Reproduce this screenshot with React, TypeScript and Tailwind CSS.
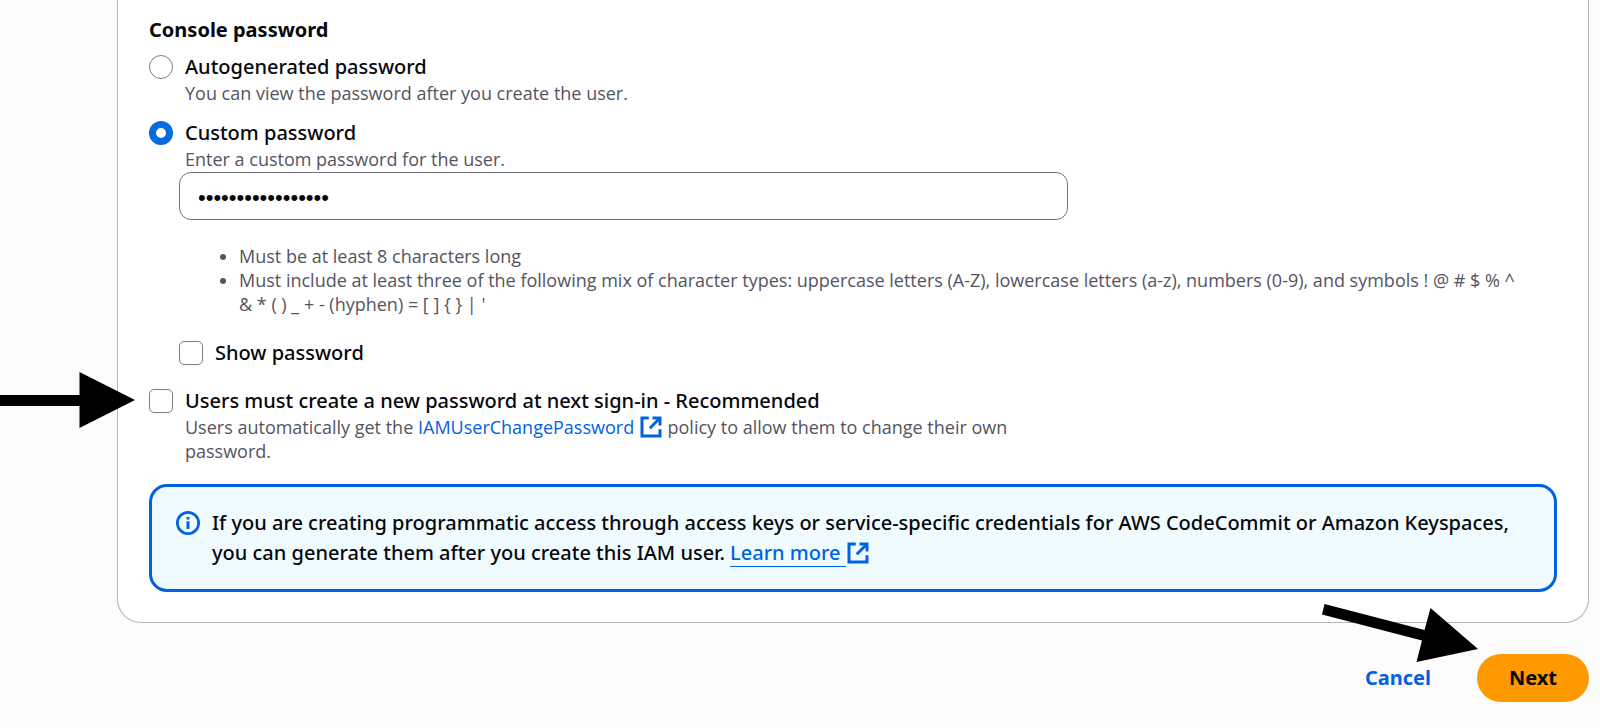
import { useState } from 'react'
import type { ReactNode } from 'react'

function ExternalIcon() {
  return (
    <svg viewBox="0 0 16 16" className="-mt-1 inline-block h-6 w-6" fill="none" stroke="currentColor" strokeWidth="2" aria-hidden="true">
      <path d="M9 2h5v5" />
      <path d="m7.2 8.8 6.3-6.3" />
      <path d="M14 9.5V14H2V2h4.5" />
    </svg>
  )
}

function InfoIcon() {
  return (
    <svg viewBox="0 0 16 16" className="mt-[3px] h-6 w-6 shrink-0 text-[#0062e0]" aria-hidden="true">
      <circle cx="8" cy="8" r="7.1" fill="none" stroke="currentColor" strokeWidth="1.8" />
      <path d="M7 4h2v1.7H7zM7 6.8h2V12H7z" fill="currentColor" />
    </svg>
  )
}

interface OptionProps {
  id: string
  type: 'radio' | 'checkbox'
  label: string
  checked: boolean
  onChange: () => void
  children?: ReactNode
}

function Option({ id, type, label, checked, onChange, children }: OptionProps) {
  return (
    <div className="flex gap-3">
      <input
        id={id}
        type={type}
        name={type === 'radio' ? 'password-type' : id}
        checked={checked}
        onChange={onChange}
        className={
          type === 'radio'
            ? 'mt-[3px] h-6 w-6 shrink-0 appearance-none rounded-full border border-[#7c7c86] bg-white checked:border-[7px] checked:border-[#006ce0]'
            : 'mt-[3px] h-6 w-6 shrink-0 appearance-none rounded-[5px] border border-[#7c7c86] bg-white checked:bg-[#006ce0]'
        }
      />
      <div>
        <label htmlFor={id} className="block text-xl/[30px] font-medium">{label}</label>
        {children && <p className="-mt-px font-['Open_Sans',sans-serif] text-lg/6 text-[#545461]">{children}</p>}
      </div>
    </div>
  )
}

const symbolRule =
  "Must include at least three of the following mix of character types: uppercase letters (A-Z), lowercase letters (a-z), numbers (0-9), and symbols ! @ # $ % ^ & * ( ) _ + - (hyphen) = [ ] { } | '"

export default function App() {
  const [custom, setCustom] = useState(true)
  const [password, setPassword] = useState('Xk29vLq7Pw04TzRm1')
  const [show, setShow] = useState(false)
  const [reset, setReset] = useState(false)

  return (
    <div className="relative min-h-screen overflow-hidden bg-[#fcfcfd] pr-[11px] pl-[117px] font-['Noto_Sans',sans-serif] text-[#06080c]">
      <main className="rounded-b-3xl border border-t-0 border-[#b4b4bb] bg-white px-[31px] pt-[15px] pb-[30px]">
        <h2 className="text-xl/[30px] font-bold">Console password</h2>
        <div className="mt-[7px] flex flex-col gap-[13px]">
          <Option id="auto" type="radio" label="Autogenerated password" checked={!custom} onChange={() => setCustom(false)}>
            You can view the password after you create the user.
          </Option>
          <Option id="custom" type="radio" label="Custom password" checked={custom} onChange={() => setCustom(true)}>
            Enter a custom password for the user.
          </Option>
        </div>

        <div className="mt-px pl-[30px]">
          <input
            type={show ? 'text' : 'password'}
            aria-label="Custom password"
            value={password}
            onChange={e => setPassword(e.target.value)}
            className="block h-12 w-full max-w-[889px] rounded-xl border border-[#72727e] bg-white px-[18px] pt-1 font-['Liberation_Sans',sans-serif] text-[22px]"
          />
          <ul className="mt-6 mb-[22px] list-disc pr-8 pl-[60px] font-['Open_Sans',sans-serif] text-lg/6 text-[#545461]">
            <li>Must be at least 8 characters long</li>
            <li>{symbolRule}</li>
          </ul>
          <Option id="show" type="checkbox" label="Show password" checked={show} onChange={() => setShow(!show)} />
        </div>

        <div className="mt-[18px] max-w-[890px]">
          <Option id="reset" type="checkbox" label="Users must create a new password at next sign-in - Recommended" checked={reset} onChange={() => setReset(!reset)}>
            Users automatically get the{' '}
            <a href="#policy" className="text-[#0062e0]">IAMUserChangePassword <ExternalIcon /></a>{' '}
            policy to allow them to change their own password.
          </Option>
        </div>

        <div className="mt-[21px] flex gap-3 rounded-[18px] border-[3px] border-[#0062e0] bg-[#f0fbff] px-6 py-[21px]">
          <InfoIcon />
          <p className="text-xl/[30px] font-medium">
            If you are creating programmatic access through access keys or service-specific credentials for AWS CodeCommit or Amazon Keyspaces, you can generate them after you create this IAM user.{' '}
            <a href="#learn" className="text-[#0062e0]">
              <span className="border-b border-current">Learn more </span>
              <ExternalIcon />
            </a>
          </p>
        </div>
      </main>

      <div className="mt-[31px] flex justify-end gap-[46px] text-xl font-bold">
        <button type="button" className="text-[#0062e0]">Cancel</button>
        <button type="button" className="h-12 rounded-full bg-[#ff9900] px-8">Next</button>
      </div>

      {/* pointer arrows */}
      <svg viewBox="0 0 135 56" className="pointer-events-none absolute top-[372px] left-0 h-14 w-[135px]" aria-hidden="true">
        <path d="M0 23h79.5V0L135 28 79.5 56V34H0z" />
      </svg>
      <svg viewBox="0 0 156 59" className="pointer-events-none absolute top-[604px] right-[122px] h-[59px] w-[156px]" aria-hidden="true">
        <path d="m2.5 0 100 26L108.5 4 156 45 94.5 58 100 36.500 0 10.5z" />
      </svg>
    </div>
  )
}
